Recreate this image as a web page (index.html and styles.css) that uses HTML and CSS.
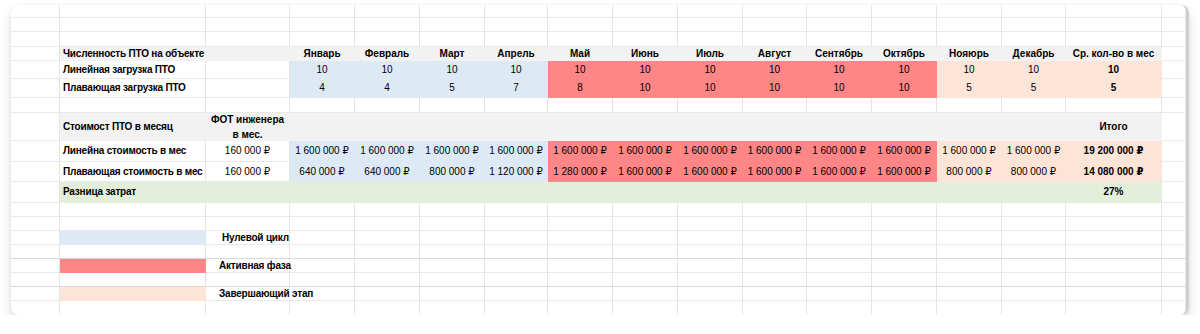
FILE: index.html
```html
<!DOCTYPE html>
<html lang="ru">
<head>
<meta charset="utf-8">
<title>ПТО</title>
<link rel="stylesheet" href="styles.css">
</head>
<body>
<div class="card">
  <div class="sheet">
    <!-- row 1 -->
    <div class="c"></div><div class="c"></div><div class="c"></div><div class="c"></div><div class="c"></div><div class="c"></div><div class="c"></div><div class="c"></div><div class="c"></div><div class="c"></div><div class="c"></div><div class="c"></div><div class="c"></div><div class="c"></div><div class="c"></div><div class="c"></div><div class="c"></div>
    <!-- row 2 -->
    <div class="c"></div><div class="c"></div><div class="c"></div><div class="c"></div><div class="c"></div><div class="c"></div><div class="c"></div><div class="c"></div><div class="c"></div><div class="c"></div><div class="c"></div><div class="c"></div><div class="c"></div><div class="c"></div><div class="c"></div><div class="c"></div><div class="c"></div>
    <!-- row 3 -->
    <div class="c"></div><div class="c"></div><div class="c"></div><div class="c"></div><div class="c"></div><div class="c"></div><div class="c"></div><div class="c"></div><div class="c"></div><div class="c"></div><div class="c"></div><div class="c"></div><div class="c"></div><div class="c"></div><div class="c"></div><div class="c"></div><div class="c"></div>
    <!-- row 4: header -->
    <div class="c"></div>
    <div class="c hd b l">Численность ПТО на объекте</div>
    <div class="c hd"></div>
    <div class="c hd b">Январь</div>
    <div class="c hd b">Февраль</div>
    <div class="c hd b">Март</div>
    <div class="c hd b">Апрель</div>
    <div class="c hd b">Май</div>
    <div class="c hd b">Июнь</div>
    <div class="c hd b">Июль</div>
    <div class="c hd b">Август</div>
    <div class="c hd b">Сентябрь</div>
    <div class="c hd b">Октябрь</div>
    <div class="c hd b">Нояюрь</div>
    <div class="c hd b">Декабрь</div>
    <div class="c hd b">Ср. кол-во в мес</div>
    <div class="c"></div>
    <!-- row 5 -->
    <div class="c"></div>
    <div class="c b l">Линейная загрузка ПТО</div>
    <div class="c"></div>
    <div class="c bl">10</div><div class="c bl">10</div><div class="c bl">10</div><div class="c bl">10</div>
    <div class="c rd">10</div><div class="c rd">10</div><div class="c rd">10</div><div class="c rd">10</div><div class="c rd">10</div><div class="c rd">10</div>
    <div class="c pc">10</div><div class="c pc">10</div>
    <div class="c pc b">10</div>
    <div class="c"></div>
    <!-- row 6 -->
    <div class="c"></div>
    <div class="c b l">Плавающая загрузка ПТО</div>
    <div class="c"></div>
    <div class="c bl">4</div><div class="c bl">4</div><div class="c bl">5</div><div class="c bl">7</div>
    <div class="c rd">8</div><div class="c rd">10</div><div class="c rd">10</div><div class="c rd">10</div><div class="c rd">10</div><div class="c rd">10</div>
    <div class="c pc">5</div><div class="c pc">5</div>
    <div class="c pc b">5</div>
    <div class="c"></div>
    <!-- row 7 -->
    <div class="c"></div><div class="c"></div><div class="c"></div><div class="c"></div><div class="c"></div><div class="c"></div><div class="c"></div><div class="c"></div><div class="c"></div><div class="c"></div><div class="c"></div><div class="c"></div><div class="c"></div><div class="c"></div><div class="c"></div><div class="c"></div><div class="c"></div>
    <!-- row 8: cost header -->
    <div class="c"></div>
    <div class="c hd b l">Стоимост ПТО в месяц</div>
    <div class="c hd b two">ФОТ инженера<br>в мес.</div>
    <div class="c hd span12"></div>
    <div class="c hd b">Итого</div>
    <div class="c"></div>
    <!-- row 9 -->
    <div class="c"></div>
    <div class="c b l">Линейна стоимость в мес</div>
    <div class="c">160 000 ₽</div>
    <div class="c bl">1 600 000 ₽</div><div class="c bl">1 600 000 ₽</div><div class="c bl">1 600 000 ₽</div><div class="c bl">1 600 000 ₽</div>
    <div class="c rd">1 600 000 ₽</div><div class="c rd">1 600 000 ₽</div><div class="c rd">1 600 000 ₽</div><div class="c rd">1 600 000 ₽</div><div class="c rd">1 600 000 ₽</div><div class="c rd">1 600 000 ₽</div>
    <div class="c pc">1 600 000 ₽</div><div class="c pc">1 600 000 ₽</div>
    <div class="c pc b">19 200 000 ₽</div>
    <div class="c"></div>
    <!-- row 10 -->
    <div class="c"></div>
    <div class="c b l">Плавающая стоимость в мес</div>
    <div class="c">160 000 ₽</div>
    <div class="c bl">640 000 ₽</div><div class="c bl">640 000 ₽</div><div class="c bl">800 000 ₽</div><div class="c bl">1 120 000 ₽</div>
    <div class="c rd">1 280 000 ₽</div><div class="c rd">1 600 000 ₽</div><div class="c rd">1 600 000 ₽</div><div class="c rd">1 600 000 ₽</div><div class="c rd">1 600 000 ₽</div><div class="c rd">1 600 000 ₽</div>
    <div class="c pc">800 000 ₽</div><div class="c pc">800 000 ₽</div>
    <div class="c pc b">14 080 000 ₽</div>
    <div class="c"></div>
    <!-- row 11 -->
    <div class="c"></div>
    <div class="c gr b l">Разница затрат</div>
    <div class="c gr span13"></div>
    <div class="c gr b">27%</div>
    <div class="c"></div>
    <!-- row 12 -->
    <div class="c"></div><div class="c"></div><div class="c"></div><div class="c"></div><div class="c"></div><div class="c"></div><div class="c"></div><div class="c"></div><div class="c"></div><div class="c"></div><div class="c"></div><div class="c"></div><div class="c"></div><div class="c"></div><div class="c"></div><div class="c"></div><div class="c"></div>
    <!-- row 13 -->
    <div class="c"></div><div class="c"></div><div class="c"></div><div class="c"></div><div class="c"></div><div class="c"></div><div class="c"></div><div class="c"></div><div class="c"></div><div class="c"></div><div class="c"></div><div class="c"></div><div class="c"></div><div class="c"></div><div class="c"></div><div class="c"></div><div class="c"></div>
    <!-- row 14: legend blue -->
    <div class="c"></div>
    <div class="c bl"></div>
    <div class="c b l lg1">Нулевой цикл</div>
    <div class="c"></div><div class="c"></div><div class="c"></div><div class="c"></div><div class="c"></div><div class="c"></div><div class="c"></div><div class="c"></div><div class="c"></div><div class="c"></div><div class="c"></div><div class="c"></div><div class="c"></div><div class="c"></div>
    <!-- row 15 -->
    <div class="c dk"></div><div class="c dk"></div><div class="c dk"></div><div class="c dk"></div><div class="c dk"></div><div class="c dk"></div><div class="c dk"></div><div class="c dk"></div><div class="c dk"></div><div class="c dk"></div><div class="c dk"></div><div class="c dk"></div><div class="c dk"></div><div class="c dk"></div><div class="c dk"></div><div class="c dk"></div><div class="c dk"></div>
    <!-- row 16: legend red -->
    <div class="c"></div>
    <div class="c rd"></div>
    <div class="c b l lg2">Активная фаза</div>
    <div class="c"></div><div class="c"></div><div class="c"></div><div class="c"></div><div class="c"></div><div class="c"></div><div class="c"></div><div class="c"></div><div class="c"></div><div class="c"></div><div class="c"></div><div class="c"></div><div class="c"></div><div class="c"></div>
    <!-- row 17 -->
    <div class="c dk"></div><div class="c dk"></div><div class="c dk"></div><div class="c dk"></div><div class="c dk"></div><div class="c dk"></div><div class="c dk"></div><div class="c dk"></div><div class="c dk"></div><div class="c dk"></div><div class="c dk"></div><div class="c dk"></div><div class="c dk"></div><div class="c dk"></div><div class="c dk"></div><div class="c dk"></div><div class="c dk"></div>
    <!-- row 18: legend peach -->
    <div class="c"></div>
    <div class="c pc"></div>
    <div class="c b l lg2 over">Завершающий этап</div>
    <div class="c"></div><div class="c"></div><div class="c"></div><div class="c"></div><div class="c"></div><div class="c"></div><div class="c"></div><div class="c"></div><div class="c"></div><div class="c"></div><div class="c"></div><div class="c"></div><div class="c"></div><div class="c"></div>
    <!-- row 19 -->
    <div class="c nb"></div><div class="c nb"></div><div class="c nb"></div><div class="c nb"></div><div class="c nb"></div><div class="c nb"></div><div class="c nb"></div><div class="c nb"></div><div class="c nb"></div><div class="c nb"></div><div class="c nb"></div><div class="c nb"></div><div class="c nb"></div><div class="c nb"></div><div class="c nb"></div><div class="c nb"></div><div class="c nb"></div>
  </div>
</div>
</body>
</html>
```
FILE: styles.css
```css
html, body {
  margin: 0;
  padding: 0;
  background: #ffffff;
}

body {
  padding: 5px 0 0 11px;
  font-family: "Liberation Sans", "DejaVu Sans", sans-serif;
  color: #000000;
}

.card {
  width: 1175px;
  border-right: 3px solid #cfcfcf;
  border-radius: 8px;
  overflow: hidden;
  background: #ffffff;
  box-shadow: 0 6px 12px rgba(0, 0, 0, 0.14), 0 0 3px rgba(0, 0, 0, 0.06);
}

.sheet {
  display: grid;
  grid-template-columns: 49px 146px 84px 65px 65px 65px 63px 65px 65px 65px 64px 65px 65px 65px 64px 96px 24px;
  grid-template-rows: 13px 14px 15px 14px 18px 19px 15px 28px 21px 20px 21px 14px 14px 14px 14px 14px 14px 14px 14px;
}

.c {
  box-sizing: border-box;
  border-right: 1px solid #e4e4e4;
  border-bottom: 1px solid #e9e9e9;
  display: flex;
  align-items: center;
  justify-content: center;
  font-size: 10px;
  line-height: 12px;
  white-space: nowrap;
  overflow: visible;
  min-width: 0;
}

.l {
  justify-content: flex-start;
  padding-left: 3px;
  letter-spacing: -0.2px;
  position: relative;
  z-index: 1;
}

.b {
  font-weight: bold;
  color: #000000;
}

.hd {
  background: #f2f2f2;
  border-color: transparent;
}

.bl {
  background: #dde9f5;
  border-color: transparent;
}

.rd {
  background: #ff8686;
  border-color: transparent;
}

.pc {
  background: #fce4d7;
  border-color: transparent;
}

.gr {
  background: #e3efdb;
  border-color: transparent;
}

.two {
  text-align: center;
  line-height: 15px;
}

.span12 {
  grid-column: span 12;
}

.span13 {
  grid-column: span 13;
}

.lg1 {
  padding-left: 16px;
}

.lg2 {
  padding-left: 13px;
}

.over {
  border-right-color: transparent;
}

.dk {
  border-bottom-color: #d8d8d8;
}

.nb {
  border-bottom-color: transparent;
}
```
